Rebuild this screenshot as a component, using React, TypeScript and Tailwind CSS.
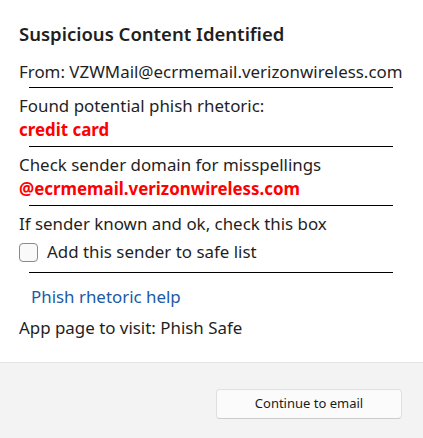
import React from "react";

function Rule({ className = "" }: { className?: string }) {
  return <div className={`ml-[10px] w-[364px] h-px bg-black ${className}`} />;
}

export default function App() {
  return (
    <div
      className="w-[423px] h-[438px] bg-white flex flex-col text-[#1f1f1f]"
      style={{ fontFamily: '"Noto Sans", "Open Sans", sans-serif' }}
    >
      <div className="flex-1 px-[19px] pt-[22px] text-[16.9px] leading-[24px]">
        <div className="text-[18.5px] font-semibold leading-[24px]">
          Suspicious Content Identified
        </div>
        <div className="mt-[14px] whitespace-nowrap">
          From: VZWMail@ecrmemail.verizonwireless.com
        </div>
        <Rule className="mt-[3px]" />

        <div className="mt-[6px]">Found potential phish rhetoric:</div>
        <div className="font-bold text-[#ff0000]">credit card</div>
        <Rule className="mt-[4px]" />

        <div className="mt-[6px]">Check sender domain for misspellings</div>
        <div className="font-bold text-[#ff0000]">
          @ecrmemail.verizonwireless.com
        </div>
        <Rule className="mt-[4px]" />

        <div className="mt-[6px]">If sender known and ok, check this box</div>
        <label className="mt-[4px] flex items-center gap-[9px] h-[24px]">
          <span className="w-[19px] h-[19px] rounded-[4px] border border-[#8a8a8a] bg-[#f9f9f9]" />
          <span>Add this sender to safe list</span>
        </label>
        <Rule className="mt-[8px]" />

        <a className="block mt-[12px] ml-[12px] text-[#1a5aa6]" href="#">
          Phish rhetoric help
        </a>
        <div className="mt-[7px]">App page to visit: Phish Safe</div>
      </div>

      <div className="h-[76px] shrink-0 bg-[#f3f3f3] border-t border-[#e5e5e5] flex justify-end pt-[26px] pr-[21px]">
        <button className="w-[186px] h-[30px] bg-[#fbfbfb] border border-[#e0e0e0] border-b-[#cccccc] rounded-[4px] text-[13px] text-[#1b1b1b]">
          Continue to email
        </button>
      </div>
    </div>
  );
}
